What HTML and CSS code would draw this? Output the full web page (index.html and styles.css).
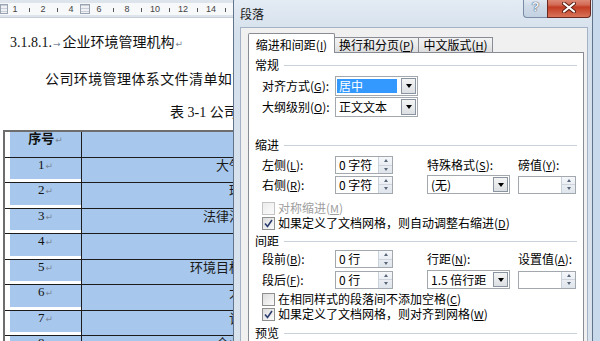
FILE: index.html
```html
<!DOCTYPE html>
<html>

<head>
  <meta charset="UTF-8">
  <meta name="viewport" content="width=device-width, initial-scale=1">
  <title>段落</title>

  <link rel="stylesheet" href="styles.css">
</head>

<body>

  <div class="word">
    <div class="doc">
      <div class="ruler">
        <div class="ruler-band">
          <span class="marker"></span>
          <span>1</span>
          <span class="tick"></span>
          <span>2</span>
          <span class="tick"></span>
          <span>4</span>
          <span class="marker wide"></span>
          <span>6</span>
          <span class="tick"></span>
          <span>8</span>
          <span class="tick"></span>
          <span>10</span>
          <span class="tick"></span>
          <span>12</span>
          <span class="tick"></span>
          <span>14</span>
          <span class="tick"></span>
        </div>
      </div>

      <div class="page">
        <p class="sec">3.1.8.1.<span class="mark arrow">→</span>企业环境管理机构<span class="mark">↵</span></p>
        <p class="intro">公司环境管理体系文件清单如下</p>
        <p class="cap">表 3-1 公司环</p>

        <!-- only the part of the second column left of the dialog is visible -->
        <table class="files">
          <tr class="head">
            <td class="no"><div class="sel"><b>序号</b><span class="mark">↵</span></div></td>
            <td class="name"></td>
          </tr>
          <tr>
            <td class="no"><div class="sel">1<span class="mark">↵</span></div></td>
            <td class="name">大气</td>
          </tr>
          <tr>
            <td class="no"><div class="sel">2<span class="mark">↵</span></div></td>
            <td class="name">环</td>
          </tr>
          <tr>
            <td class="no"><div class="sel">3<span class="mark">↵</span></div></td>
            <td class="name">法律法</td>
          </tr>
          <tr>
            <td class="no"><div class="sel">4<span class="mark">↵</span></div></td>
            <td class="name"></td>
          </tr>
          <tr>
            <td class="no"><div class="sel">5<span class="mark">↵</span></div></td>
            <td class="name">环境目标</td>
          </tr>
          <tr>
            <td class="no"><div class="sel">6<span class="mark">↵</span></div></td>
            <td class="name">大</td>
          </tr>
          <tr>
            <td class="no"><div class="sel">7<span class="mark">↵</span></div></td>
            <td class="name">记</td>
          </tr>
          <tr>
            <td class="no"><div class="sel">8<span class="mark">↵</span></div></td>
            <td class="name">企业</td>
          </tr>
        </table>
      </div>
    </div>
    <div class="under"></div>
    <div class="vscroll"></div>
  </div>

  <div class="dialog">
    <div class="titlebar">
      <span class="dlg-title">段落</span>
      <div class="caption-btns">
        <span class="help-btn">?</span>
        <span class="close-btn">
          <svg width="14" height="11" viewBox="0 0 14 11">
            <path d="M2 1.5 L12 9.5 M12 1.5 L2 9.5" stroke="#5a1e16" stroke-width="4" stroke-linecap="round" />
            <path d="M2 1.5 L12 9.5 M12 1.5 L2 9.5" stroke="#fff" stroke-width="2.2" stroke-linecap="round" />
          </svg>
        </span>
      </div>
    </div>

    <div class="client">
      <div class="tabs">
        <span class="tab active">缩进和间距(<u>I</u>)</span>
        <span class="tab t2">换行和分页(<u>P</u>)</span>
        <span class="tab t3">中文版式(<u>H</u>)</span>
      </div>

      <div class="panel">
        <div class="group">常规</div>
        <div class="row r-align">
          <label>对齐方式(<u>G</u>):</label>
          <div class="combo"><span class="val hl">居中</span><span class="drop"></span></div>
        </div>
        <div class="row r-outline">
          <label>大纲级别(<u>O</u>):</label>
          <div class="combo"><span class="val">正文文本</span><span class="drop"></span></div>
        </div>

        <div class="group g-indent">缩进</div>
        <div class="row r-left">
          <label>左侧(<u>L</u>):</label>
          <div class="spin"><span class="val">0 字符</span><span class="arrows"><i class="up"></i><i class="down"></i></span></div>
          <label>特殊格式(<u>S</u>):</label>
          <label>磅值(<u>Y</u>):</label>
        </div>
        <div class="row r-right">
          <label>右侧(<u>R</u>):</label>
          <div class="spin"><span class="val">0 字符</span><span class="arrows"><i class="up"></i><i class="down"></i></span></div>
          <div class="combo small"><span class="val">(无)</span><span class="drop"></span></div>
          <div class="spin"><span class="val"></span><span class="arrows"><i class="up"></i><i class="down"></i></span></div>
        </div>
        <div class="check c-mirror disabled"><span class="box"></span>对称缩进(<u>M</u>)</div>
        <div class="check c-grid1"><span class="box on"><svg width="11" height="11" viewBox="0 0 11 11"><path d="M2 5.5 L4.5 8.5 L9 2" fill="none" stroke="#2c3e70" stroke-width="1.6" /></svg></span>如果定义了文档网格，则自动调整右缩进(<u>D</u>)</div>

        <div class="group g-space">间距</div>
        <div class="row r-before">
          <label>段前(<u>B</u>):</label>
          <div class="spin"><span class="val">0 行</span><span class="arrows"><i class="up"></i><i class="down"></i></span></div>
          <label>行距(<u>N</u>):</label>
          <label>设置值(<u>A</u>):</label>
        </div>
        <div class="row r-after">
          <label>段后(<u>F</u>):</label>
          <div class="spin"><span class="val">0 行</span><span class="arrows"><i class="up"></i><i class="down"></i></span></div>
          <div class="combo small"><span class="val">1.5 倍行距</span><span class="drop"></span></div>
          <div class="spin"><span class="val"></span><span class="arrows"><i class="up"></i><i class="down"></i></span></div>
        </div>
        <div class="check c-nospace"><span class="box"></span>在相同样式的段落间不添加空格(<u>C</u>)</div>
        <div class="check c-grid2"><span class="box on"><svg width="11" height="11" viewBox="0 0 11 11"><path d="M2 5.5 L4.5 8.5 L9 2" fill="none" stroke="#2c3e70" stroke-width="1.6" /></svg></span>如果定义了文档网格，则对齐到网格(<u>W</u>)</div>

        <div class="group g-preview">预览</div>
      </div>
    </div>
  </div>

</body>

</html>
```

FILE: styles.css
```css
body {
  margin: 0;
  width: 600px;
  height: 341px;
  overflow: hidden;
  position: relative;
  background: #fff;
  font-family: "Liberation Serif", "Noto Sans CJK SC", serif;
}

/* word window behind the dialog */
.word {
  display: flex;
  height: 341px;
}

.doc {
  width: 233px;
  flex: none;
  overflow: hidden;
}

.under {
  flex: 1;
  background: #fff;
}

.vscroll {
  width: 7px;
  background: #c9d9ec;
  border-left: 1px solid #9fb6d0;
}

.ruler {
  height: 18px;
  box-sizing: border-box;
  padding-top: 3px;
  background: #dde4ec;
  border-bottom: 1px solid #c6ced8;
}

.ruler-band {
  display: flex;
  align-items: center;
  height: 12px;
  background: #f7f8fa;
  font-family: "Liberation Sans", sans-serif;
  font-size: 9px;
  line-height: 12px;
  color: #444;
}

.ruler-band span {
  width: 14px;
  flex-shrink: 0;
  text-align: center;
}

.ruler-band .marker {
  width: 8px;
  height: 10px;
  box-sizing: border-box;
  border: 1px solid #9aa4b0;
  background: repeating-linear-gradient(#c9d0d9 0 1px, #eef0f3 1px 3px);
}

.ruler-band .marker.wide {
  width: 10px;
  margin: 0 2px;
}

.ruler-band .tick::before {
  content: "";
  display: inline-block;
  width: 1px;
  height: 4px;
  background: #555;
  vertical-align: middle;
}

.page {
  font-size: 14px;
  color: #111;
  white-space: nowrap;
}

.page p {
  margin: 0;
  line-height: 20px;
}

.page .sec {
  margin-top: 15px;
  padding-left: 10px;
}

.page .intro {
  margin-top: 16px;
  padding-left: 45px;
  letter-spacing: 0.4px;
}

.page .cap {
  margin-top: 13px;
  padding-left: 170px;
}

.mark {
  color: #7b879b;
  font-family: "DejaVu Sans", sans-serif;
  font-size: 9px;
  margin-left: 1px;
}

.mark.arrow {
  margin: 0 2px 0 1px;
}

.files {
  margin: 7px 0 0 3px;
  border-collapse: collapse;
  border: 2px solid #6e6e6e;
  width: 250px;
  font-size: 13px;
}

.files td {
  border: 1px solid #1c1c1c;
  padding: 0;
  height: 24.5px;
  vertical-align: top;
}

.files .no {
  width: 76px;
}

.files .sel {
  margin-left: 5px;
  height: 21.5px;
  text-align: center;
  background: #a7c8ec;
  line-height: 13px;
}

.files .head .sel {
  height: 24.5px;
}

.files .name {
  background: #a7c8ec;
  text-align: right;
  padding-right: 9px;
  line-height: 13px;
  font-family: "Noto Sans CJK SC", sans-serif;
  color: #1a1a1a;
}

/* paragraph dialog */
.dialog {
  position: absolute;
  left: 233px;
  top: -6px;
  width: 360px;
  height: 360px;
  box-sizing: border-box;
  display: flex;
  flex-direction: column;
  padding: 0 4px 0 6px;
  background: linear-gradient(#e6edf5, #d4e0ec 40px, #d9e3ee);
  border: 1px solid #62748b;
  border-radius: 7px 7px 0 0;
  font-family: "Noto Sans CJK SC", sans-serif;
  font-size: 12px;
  color: #000;
}

.titlebar {
  display: flex;
  height: 32px;
  flex-shrink: 0;
}

.dlg-title {
  padding-top: 12px;
  line-height: 14px;
  color: #1a1a1a;
}

.caption-btns {
  display: flex;
  margin-left: auto;
  margin-right: -3px;
  height: 23px;
}

.help-btn {
  width: 24px;
  box-sizing: border-box;
  border: 1px solid #7a8ca4;
  border-top: none;
  border-right: none;
  border-radius: 0 0 0 4px;
  background: linear-gradient(#edf2f8, #d0dbe8 50%, #c3d1e2);
  text-align: center;
  padding-top: 5px;
  font-family: "Liberation Sans", sans-serif;
  font-weight: bold;
  font-size: 13px;
  line-height: 14px;
  color: #eef3f9;
  text-shadow: 0 0 1px #34455e, 0 0 1px #34455e;
}

.close-btn {
  width: 44px;
  box-sizing: border-box;
  border: 1px solid #6b2a21;
  border-top: none;
  border-radius: 0 0 4px 0;
  background: linear-gradient(#e9a796, #d26a55 45%, #c23c22 55%, #d8735a);
  display: flex;
  align-items: center;
  justify-content: center;
  padding-top: 3px;
}

.client {
  flex: 1;
  display: flex;
  flex-direction: column;
  background: #f0f0f0;
  border: 1px solid #a3b2c5;
  padding: 5px 3px 0 7px;
}

.tabs {
  display: flex;
  align-items: flex-end;
  height: 20px;
  margin-bottom: -1px;
  position: relative;
}

.tab {
  box-sizing: border-box;
  border: 1px solid #898c95;
  border-bottom: none;
  text-align: center;
  line-height: 14px;
}

.tab.active {
  width: 87px;
  height: 20px;
  padding-top: 4px;
  background: #fff;
  border-radius: 2px 2px 0 0;
}

.tab.t2,
.tab.t3 {
  height: 15px;
  margin-bottom: 1px;
  background: linear-gradient(#f3f3f3, #ebebeb 50%, #dcdcdc);
}

.tab.t2 {
  width: 84px;
  border-left: none;
}

.tab.t3 {
  width: 74px;
  border-left: none;
}

.panel {
  flex: 1;
  background: #fff;
  border: 1px solid #898c95;
  padding: 5px 6px 0 6px;
}

.group {
  display: flex;
  align-items: center;
  height: 14px;
  line-height: 14px;
}

.group::after {
  content: "";
  flex: 1;
  height: 1px;
  margin-left: 5px;
  background: #c9d2da;
}

.g-indent {
  margin-top: 21px;
}

.g-space {
  margin-top: 4px;
}

.g-preview {
  margin-top: 5px;
}

.row {
  display: grid;
  grid-template-columns: 73px 92px 91px 59px;
  align-items: center;
  padding-left: 7px;
  height: 18px;
}

.row label {
  line-height: 14px;
  white-space: nowrap;
}

.r-align {
  margin-top: 4px;
  height: 20px;
}

.r-outline {
  margin-top: 1px;
  height: 20px;
}

.r-left {
  margin-top: 4px;
}

.r-right {
  margin-top: 1px;
}

.r-before {
  margin-top: 2px;
}

.r-after {
  margin-top: 2px;
}

u {
  font-size: 11px;
  text-decoration-thickness: 1px;
}

.combo {
  display: flex;
  align-items: center;
  width: 83px;
  height: 20px;
  box-sizing: border-box;
  border: 1px solid #a3a7ae;
  background: #fff;
}

.combo.small {
  height: 19px;
}

.combo .val {
  flex: 1;
  padding-left: 3px;
  line-height: 14px;
  white-space: pre;
}

.combo .val.hl {
  margin: 0 3px 0 1px;
  padding-left: 2px;
  background: #3399ff;
  color: #fff;
}

.combo .drop {
  width: 15px;
  align-self: stretch;
  margin: 1px;
  box-sizing: border-box;
  border: 1px solid #8a93a0;
  background: linear-gradient(#f4f4f4, #dcdfe3);
  display: flex;
  align-items: center;
  justify-content: center;
}

.combo .drop::before {
  content: "";
  border-left: 3.5px solid transparent;
  border-right: 3.5px solid transparent;
  border-top: 4px solid #000;
}

.spin {
  display: flex;
  width: 58px;
  height: 18px;
  box-sizing: border-box;
  border: 1px solid #a3a7ae;
  background: #fff;
}

.spin .val {
  flex: 1;
  padding-left: 3px;
  line-height: 16px;
  white-space: pre;
}

.spin .arrows {
  width: 13px;
  display: flex;
  flex-direction: column;
  border-left: 1px solid #c9d1db;
  background: linear-gradient(#f5f7fa, #dfe5ec);
}

.arrows i {
  flex: 1;
  display: flex;
  align-items: center;
  justify-content: center;
}

.arrows .up {
  border-bottom: 1px solid #cdd4dd;
}

.arrows .up::before {
  content: "";
  border-left: 2.5px solid transparent;
  border-right: 2.5px solid transparent;
  border-bottom: 3px solid #5a6779;
}

.arrows .down::before {
  content: "";
  border-left: 2.5px solid transparent;
  border-right: 2.5px solid transparent;
  border-top: 3px solid #5a6779;
}

.check {
  display: flex;
  align-items: center;
  height: 14px;
  padding-left: 7px;
  line-height: 14px;
  white-space: nowrap;
}

.box {
  width: 13px;
  height: 13px;
  margin-right: 3px;
  box-sizing: border-box;
  border: 1px solid #8e8f8f;
  background: linear-gradient(135deg, #dcdcdc, #fbfbfb);
  display: flex;
  align-items: center;
  justify-content: center;
}

.check.disabled {
  color: #a0a0a0;
}

.check.disabled .box {
  border-color: #c4c4c4;
  background: linear-gradient(135deg, #ececec, #fbfbfb);
}

.c-mirror {
  margin-top: 8px;
}

.c-grid1 {
  margin-top: 1px;
}

.c-nospace {
  margin-top: 4px;
}

.c-grid2 {
  margin-top: 1px;
}
```
